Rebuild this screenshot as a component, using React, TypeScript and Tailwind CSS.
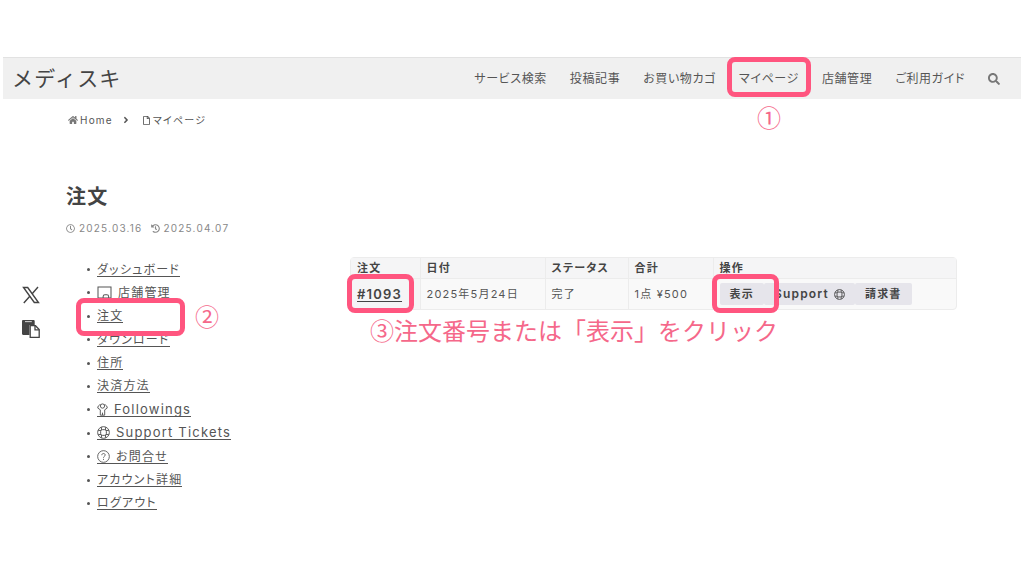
import React from 'react';
import { FaAngleRight, FaHistory, FaHome, FaRegClock, FaRegFile, FaSearch } from 'react-icons/fa';

type MenuItem = {
  label: string;
  icon?: React.ReactNode;
  latin?: boolean;
  marked?: boolean;
};

function LifeRing({ className }: { className: string }) {
  return (
    <svg viewBox="0 0 16 16" fill="none" stroke="currentColor" strokeWidth="1.2" className={className} aria-hidden="true">
      <circle cx="8" cy="8" r="7.2" />
      <rect x="4.500" y="4.500" width="7" height="7" rx="2" />
      <path d="M5.500 1.500v3.400M10.500 1.500v3.400M5.500 11.100v3.400M10.500 11.100v3.400M1.500 5.500h3.400M1.500 10.500h3.400M11.100 5.500h3.400M11.100 10.500h3.400" />
    </svg>
  );
}

function StoreIcon() {
  return (
    <svg viewBox="0 0 16 14" fill="none" stroke="currentColor" strokeWidth="1.1" className="h-[13px] w-[15px]" aria-hidden="true">
      <path d="M1 1h14v12H1z" />
      <path d="M6.5 13v-1.500a2 2 0 0 1 2-2h2a2 2 0 0 1 2 2V13" />
    </svg>
  );
}

function PersonIcon() {
  return (
    <svg viewBox="0 0 14 16" fill="none" stroke="currentColor" strokeWidth="1.200" className="h-[13px] w-[11px]" aria-hidden="true">
      <circle cx="7" cy="3.600" r="2.700" />
      <path d="M4.600 1.800C2.200 2 .900 4.300 1 6.200l3.200 2.200v6.800h5.600V8.400L13 6.200c.1-1.900-1.200-4.200-3.600-4.400" />
      <path d="M7 12v3" />
    </svg>
  );
}

function QuestionIcon() {
  return (
    <svg viewBox="0 0 16 16" fill="none" stroke="currentColor" strokeWidth="1.1" className="size-[13px]" aria-hidden="true">
      <circle cx="8" cy="8" r="7.2" />
      <path d="M5.9 6.4c0-1.3.9-2.1 2.1-2.1s2.1.8 2.1 1.9c0 1.5-2.1 1.6-2.1 3.3M8 10.9v1.3" />
    </svg>
  );
}

function XLogo() {
  return (
    <svg viewBox="0 0 18 18" fill="none" stroke="currentColor" strokeWidth="1.400" className="size-[18px]" aria-hidden="true">
      <path d="M1.500 1.500h4.200l10.800 15h-4.200z" />
      <path d="M16 1 10.200 7.700M7.800 10.200 1.800 17" />
    </svg>
  );
}

function PasteIcon() {
  return (
    <svg viewBox="0 0 18 18" className="size-[18px]" aria-hidden="true">
      <path d="M0 1.200C0 .500.500 0 1.200 0h10.300c.7 0 1.200.500 1.200 1.200V5H7.500v10H1.200C.5 15 0 14.500 0 13.800z" fill="currentColor" />
      <path d="M3 1.600h6.800" stroke="#ccc" strokeWidth="1.100" />
      <path d="M8.200 5.700h5.300l3.700 3.800v7.800h-9z" fill="#fff" stroke="currentColor" strokeWidth="1.300" />
      <path d="M13 5.700v4.200h4.200" fill="none" stroke="currentColor" strokeWidth="1.300" />
    </svg>
  );
}

const navItems = ['サービス検索', '投稿記事', 'お買い物カゴ', 'マイページ', '店舗管理', 'ご利用ガイド'];

const menuItems: MenuItem[] = [
  { label: 'ダッシュボード' },
  { label: '店舗管理', icon: <StoreIcon /> },
  { label: '注文', marked: true },
  { label: 'ダウンロード' },
  { label: '住所' },
  { label: '決済方法' },
  { label: 'Followings', icon: <PersonIcon />, latin: true },
  { label: 'Support Tickets', icon: <LifeRing className="size-[13px]" />, latin: true },
  { label: 'お問合せ', icon: <QuestionIcon /> },
  { label: 'アカウント詳細' },
  { label: 'ログアウト' },
];

const frame = 'pointer-events-none absolute z-10 rounded-lg border-[5px] border-[#ff557f]';
const note =
  "font-['Noto_Sans_CJK_JP',sans-serif] text-2xl tracking-normal text-[#f5688a] [font-feature-settings:normal]";

export default function App() {
  return (
    <div className="bg-white pt-[57px] font-['Inter','Noto_Sans_CJK_JP',sans-serif] text-xs tracking-widest text-[#555] [font-feature-settings:'palt']">
      <header className="mx-[3px] flex h-[42px] items-center justify-between border-t border-[#e2e2e2] bg-[#f0f0f0] pr-[21px] pl-[9px]">
        <a href="#" className="text-[21px] leading-8 text-[#444] [font-feature-settings:normal]">メディスキ</a>
        <nav className="flex items-center gap-[23px] leading-5 tracking-wider">
          {navItems.map((item) => (
            <a key={item} href="#" className="relative whitespace-nowrap">
              {item}
              {item === 'マイページ' && (
                <>
                  <span className={`${frame} -inset-x-3 -top-3 -bottom-2`} />
                  <span className={`${note} absolute inset-x-0 top-8 text-center`}>①</span>
                </>
              )}
            </a>
          ))}
          <button type="button" aria-label="検索">
            <FaSearch className="size-3 text-[#777]" />
          </button>
        </nav>
      </header>

      <div className="flex">
        <aside className="flex w-[66px] shrink-0 flex-col gap-4 pt-[187px] pl-[22px] text-[#444]">
          <a href="#" aria-label="X"><XLogo /></a>
          <button type="button" aria-label="コピー" className="self-start"><PasteIcon /></button>
        </aside>

        <main className="min-w-0 flex-1 pr-[67px]">
          <div className="flex items-center pt-[11px] text-[10px] leading-5">
            <a href="#" className="flex items-center gap-[2px] pl-[2px]">
              <FaHome className="size-[10px] text-[#777]" />
              Home
            </a>
            <FaAngleRight className="mx-2 size-[10px]" />
            <a href="#" className="flex items-center gap-[2px] pl-[3px]">
              <FaRegFile className="size-[9px]" />
              マイページ
            </a>
          </div>

          <h1 className="mt-[51px] text-xl leading-8 font-bold text-[#444] [font-feature-settings:normal]">注文</h1>
          <div className="mt-[5px] flex gap-2 text-[10px] leading-5 text-[#888]">
            <span className="flex items-center gap-1"><FaRegClock className="size-[9px]" />2025.03.16</span>
            <span className="flex items-center gap-1"><FaHistory className="size-[9px]" />2025.04.07</span>
          </div>

          <div className="mt-[19px] flex">
            <ul className="flex min-h-[258px] w-[284px] shrink-0 flex-col justify-between pt-px pl-[21px] leading-[23px]">
              {menuItems.map(({ label, icon, latin, marked }) => (
                <li key={label} className="relative flex h-[23px] items-center gap-[7px]">
                  <span className="size-[3px] rounded-full bg-[#555]" />
                  <a
                    href="#"
                    className={`flex items-center gap-[6px] border-b border-[#555] leading-[13px] ${latin ? 'text-[13px]' : ''}`}
                  >
                    {icon}
                    {label}
                  </a>
                  {marked && (
                    <>
                      <span className={`${frame} -top-[7px] -bottom-2 -left-[11px] w-[109px]`} />
                      <span className={`${note} absolute left-[108px]`}>②</span>
                    </>
                  )}
                </li>
              ))}
            </ul>

            <section className="min-w-0 flex-1">
              <div className="rounded border border-[#ececec] bg-[#f9f9f9]">
                <table className="w-full table-fixed text-left text-[11px] leading-5">
                  <colgroup>
                    <col className="w-[69px]" />
                    <col className="w-[125px]" />
                    <col className="w-[83px]" />
                    <col className="w-[85px]" />
                    <col />
                  </colgroup>
                  <thead className="bg-[#f5f5f6] text-[#444]">
                    <tr className="divide-x divide-[#ececec] border-b border-[#ececec]">
                      {['注文', '日付', 'ステータス', '合計', '操作'].map((head) => (
                        <th key={head} className="px-[6px] font-bold">{head}</th>
                      ))}
                    </tr>
                  </thead>
                  <tbody>
                    <tr className="divide-x divide-[#ececec] whitespace-nowrap">
                      <td className="relative bg-[#f5f5f6] px-[6px]">
                        <a href="#" className="text-[13px] font-semibold text-[#444] underline underline-offset-2">#1093</a>
                        <span className={`${frame} -top-[5px] right-[6px] -bottom-1 -left-1`} />
                      </td>
                      <td className="px-[6px]">2025年5月24日</td>
                      <td className="px-[6px]">完了</td>
                      <td className="px-[6px]">1点 ¥500</td>
                      <td className="px-[6px] py-1">
                        <div className="flex font-bold text-[#444]">
                          <button type="button" className="relative rounded-xs bg-[#e6e5eb] px-[10px] py-px">
                            表示
                            <span className={`${frame} -top-[9px] -bottom-2 -left-2 w-[67px]`} />
                          </button>
                          <button type="button" className="flex items-center gap-[5px] rounded-xs bg-[#e6e5eb] px-[10px] py-px text-xs leading-5 font-semibold">
                            Support
                            <LifeRing className="size-[11px]" />
                          </button>
                          <button type="button" className="rounded-xs bg-[#e6e5eb] px-[10px] py-px">請求書</button>
                        </div>
                      </td>
                    </tr>
                  </tbody>
                </table>
              </div>
              <p className={`${note} mt-[2px] ml-5 leading-9`}>
                ③注文番号または「表示」をクリック
              </p>
            </section>
          </div>
        </main>
      </div>
    </div>
  );
}
